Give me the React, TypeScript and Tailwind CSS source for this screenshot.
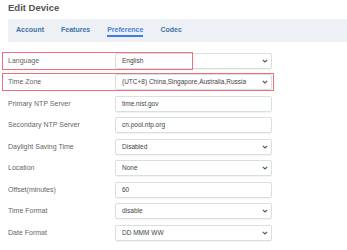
const rows: { label: string; value: string; select?: boolean }[] = [
  { label: 'Language', value: 'English', select: true },
  { label: 'Time Zone', value: '(UTC+8) China,Singapore,Australia,Russia', select: true },
  { label: 'Primary NTP Server', value: 'time.nist.gov' },
  { label: 'Secondary NTP Server', value: 'cn.pool.ntp.org' },
  { label: 'Daylight Saving Time', value: 'Disabled', select: true },
  { label: 'Location', value: 'None', select: true },
  { label: 'Offset(minutes)', value: '60' },
  { label: 'Time Format', value: 'disable', select: true },
  { label: 'Date Format', value: 'DD MMM WW', select: true },
];

const tabs = ['Account', 'Features', 'Preference', 'Codec'];

function Chevron() {
  return (
    <svg width="6" height="4" viewBox="0 0 6 4" className="ml-auto mr-[3px]">
      <polyline points="0.8,0.8 3,3 5.2,0.8" fill="none" stroke="#555" strokeWidth="1.1" />
    </svg>
  );
}

export default function App() {
  return (
    <div className="relative w-[347px] h-[250px] overflow-hidden bg-white font-['Liberation_Sans',Arial,sans-serif]">
      <h1 className="h-[19px] pl-[8px] pt-[2px] text-[9.5px] font-bold leading-[12px] text-[#555]">
        Edit Device
      </h1>

      <div className="ml-[8px] flex h-[23px] items-center gap-[17px] bg-[#edf1f5] pl-[8px]">
        {tabs.map((t) => (
          <div
            key={t}
            className={
              t === 'Preference'
                ? 'relative text-[7px] font-bold text-[#4a80dc]'
                : 'relative text-[7px] font-bold text-[#3f73a3]'
            }
          >
            {t}
            {t === 'Preference' && (
              <div className="absolute left-0 right-0 top-[10px] h-[1.5px] bg-[#3d7de0]" />
            )}
          </div>
        ))}
      </div>

      <div className="mt-[8px] flex flex-col">
        {rows.map((r) => (
          <div key={r.label} className="flex h-[21.5px] items-center">
            <div className="w-[115px] pl-[8px] text-[7px] text-[#666]">{r.label}</div>
            <div className="flex h-[16px] w-[157px] items-center rounded-[2px] border border-[#d8dfdf] pl-[6px] text-[6.5px] text-[#444] shadow-[0_1px_1px_rgba(0,0,0,0.05)]">
              <span>{r.value}</span>
              {r.select && <Chevron />}
            </div>
          </div>
        ))}
      </div>

      <div className="absolute left-[2px] top-[52px] h-[18px] w-[191px] border-[1.5px] border-[#ef7079]" />
      <div className="absolute left-[2px] top-[73px] h-[18px] w-[272px] border-[1.5px] border-[#ef7079]" />
    </div>
  );
}
